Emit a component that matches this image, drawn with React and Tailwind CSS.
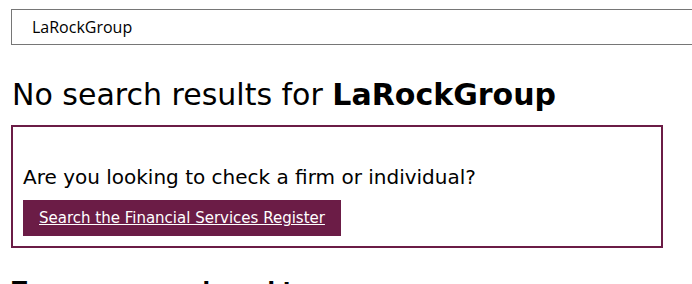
export default function App() {
  return (
    <div className="w-[692px] h-[284px] overflow-hidden bg-white text-black font-['DejaVu_Sans',Verdana,sans-serif]">
      {/* search field */}
      <div className="pt-[9px] pl-[11px]">
        <div className="w-[720px] h-[36px] border border-[#767676] flex items-center pl-[20px]">
          <span className="font-['Open_Sans',sans-serif] text-[16px] text-black">LaRockGroup</span>
        </div>
      </div>

      <div className="pl-[12px] pr-[29px] flex flex-col items-start">
        <h1 className="mt-[32px] text-[30px] leading-[36px] font-normal">
          No search results for <strong className="font-bold">LaRockGroup</strong>
        </h1>

        <div className="mt-[12px] -ml-[1px] w-[652px] border-2 border-[#6b1c46] px-[10px] pt-[38px] pb-[10px] flex flex-col items-start">
          <p className="text-[20px] leading-[24px]">Are you looking to check a firm or individual?</p>
          <a
            href="#"
            className="mt-[11px] bg-[#6b1c46] text-white underline text-[15px] leading-[36px] px-[16px]"
          >
            Search the Financial Services Register
          </a>
        </div>

        <h2 className="mt-[28px] text-[22px] leading-[28px] font-bold">Try some more broad terms</h2>
      </div>
    </div>
  );
}
